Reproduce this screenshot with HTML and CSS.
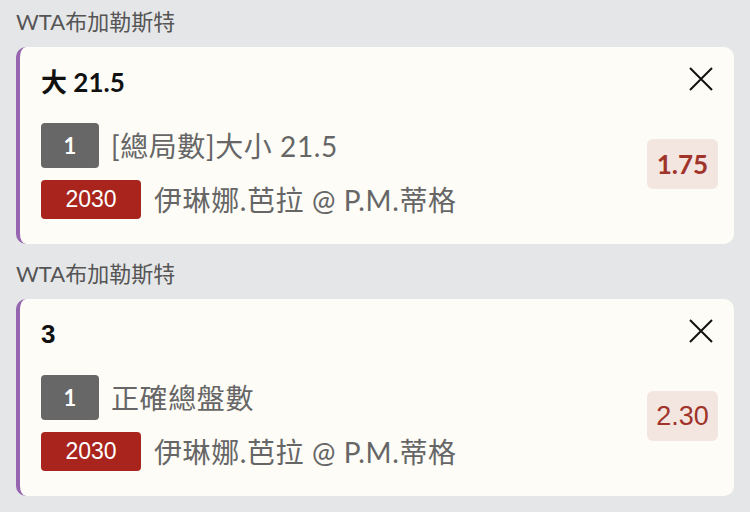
FILE: index.html
```html
<!DOCTYPE html>
<html lang="zh-Hant">
<head>
<meta charset="utf-8">
<link rel="stylesheet" href="styles.css">
</head>
<body>
<div class="page">
  <section class="group">
    <div class="league">WTA布加勒斯特</div>
    <div class="card">
      <div class="card-head">
        <div class="title">大 21.5</div>
        <svg class="close" width="24" height="24" viewBox="0 0 24 24"><path d="M1 1L23 23M23 1L1 23" stroke="#111" stroke-width="2" fill="none"/></svg>
      </div>
      <div class="card-body">
        <div class="lines">
          <div class="line"><span class="badge gray">1</span><span class="text">[總局數]大小 21.5</span></div>
          <div class="line"><span class="badge red">2030</span><span class="text">伊琳娜.芭拉 @ P.M.蒂格</span></div>
        </div>
        <div class="odds">1.75</div>
      </div>
    </div>
  </section>
  <section class="group second">
    <div class="league">WTA布加勒斯特</div>
    <div class="card">
      <div class="card-head">
        <div class="title alt">3</div>
        <svg class="close" width="24" height="24" viewBox="0 0 24 24"><path d="M1 1L23 23M23 1L1 23" stroke="#111" stroke-width="2" fill="none"/></svg>
      </div>
      <div class="card-body">
        <div class="lines">
          <div class="line"><span class="badge gray">1</span><span class="text">正確總盤數</span></div>
          <div class="line"><span class="badge red">2030</span><span class="text">伊琳娜.芭拉 @ P.M.蒂格</span></div>
        </div>
        <div class="odds alt">2.30</div>
      </div>
    </div>
  </section>
</div>
</body>
</html>
```

FILE: styles.css
```css
* { box-sizing: border-box; }
html, body { margin: 0; padding: 0; }
body {
  background: #e5e6e8;
  font-family: Lato, "Noto Sans CJK TC", sans-serif;
  width: 750px;
  height: 512px;
  overflow: hidden;
}
.page { display: flex; flex-direction: column; }
.group { display: flex; flex-direction: column; }
.group.second { margin-top: 8px; }
.league {
  font-size: 22px;
  font-weight: 400;
  line-height: 24px;
  color: #555;
  padding: 10px 16px 13px 16px;
}
.card {
  margin: 0 16px;
  background: #fdfcf6;
  border-left: 4px solid #9565b0;
  border-radius: 10px;
  padding: 20px 16px 25px 21px;
  display: flex;
  flex-direction: column;
}
.card-head {
  display: flex;
  justify-content: space-between;
  align-items: flex-start;
  height: 30px;
}
.title {
  font-size: 26px;
  font-weight: 700;
  line-height: 30px;
  color: #111;
}
.title.alt { font-family: "Liberation Sans", "Noto Sans CJK TC", sans-serif; font-size: 26px; }
.close { margin-right: 5px; display: block; }
.card-body {
  display: flex;
  align-items: center;
  margin-top: 26px;
}
.lines { display: flex; flex-direction: column; gap: 12px; }
.line { display: flex; align-items: center; }
.badge {
  display: flex;
  align-items: center;
  justify-content: center;
  color: #fff;
  border-radius: 4px;
}
.badge.gray {
  width: 58px;
  height: 45px;
  background: #676767;
  font-size: 22px;
  font-weight: 700;
  margin-right: 12px;
}
.badge.red {
  width: 100px;
  height: 39px;
  background: #a8241c;
  font-family: "Liberation Sans", sans-serif;
  font-size: 23px;
  margin-right: 13px;
}
.text {
  font-size: 28px;
  font-weight: 400;
  line-height: 32px;
  letter-spacing: 0.6px;
  color: #666;
}
.odds {
  margin-left: auto;
  margin-bottom: 14px;
  width: 71px;
  height: 50px;
  border-radius: 6px;
  background: #f3e6e0;
  color: #a0332a;
  font-size: 26px;
  font-weight: 700;
  display: flex;
  align-items: center;
  justify-content: center;
}
.odds.alt { font-family: "Liberation Sans", sans-serif; font-weight: 400; font-size: 27px; }
```
